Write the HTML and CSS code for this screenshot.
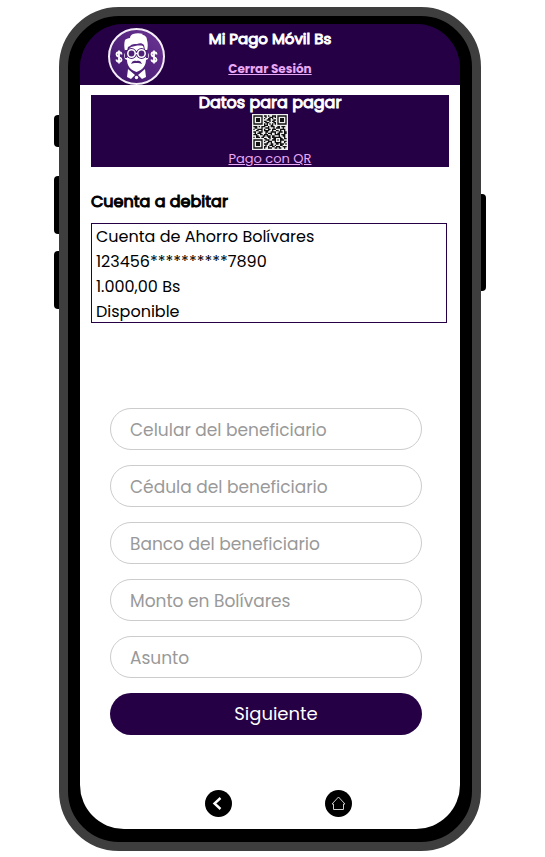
FILE: index.html
```html
<!DOCTYPE html>
<html lang="es">
<head>
<meta charset="utf-8">
<meta name="viewport" content="width=device-width, initial-scale=1">
<title>Mi Pago Móvil Bs</title>
<link rel="stylesheet" href="styles.css">
</head>
<body>
<div class="phone">
  <span class="key key-mute"></span>
  <span class="key key-up"></span>
  <span class="key key-down"></span>
  <span class="key key-power"></span>
  <main class="screen">
    <header class="header">
      <svg class="logo" viewBox="0 0 57 57" aria-hidden="true">
        <defs>
          <linearGradient id="disc" x1="0" y1="1" x2="1" y2="0">
            <stop offset="0" stop-color="#3c1268"/>
            <stop offset="1" stop-color="#6d3796"/>
          </linearGradient>
        </defs>
        <circle cx="28.500" cy="28.500" r="27.500" fill="url(#disc)" stroke="#f4eff7" stroke-width="2"/>
        <path fill="#fff" d="M17 23c-1-4-1-8 0-11 1-1 3-2 5-2 0-2 1-3 3-4 3-1 7-1 10 0l-1 1c3 0 5 2 5 5 1 3 1 7 0 11l-2-1-1-5c-2-2-4-2-7-1-3 0-5 0-7 2l-2 1-1 4z"/>
        <path fill="#fff" d="M21 21l2-2c4-1 8-2 12-1l1 3 2 9h2v-5c1 1 1 4 0 6l-2 1c0 5-3 10-9.500 12-6.500-2-9.500-7-9.500-12l-2-1c-1-2-1-5 0-6v5h2z"/>
        <g fill="#4f2177">
          <circle cx="23.500" cy="25.500" r="5.400"/><circle cx="33.500" cy="25.500" r="5.400"/>
          <path d="M17 22h7v2h-7zM33 22h7v2h-7zM26 23h5v4h-5z"/>
        </g>
        <g fill="none" stroke="#fff" stroke-width="1.600">
          <circle cx="23.500" cy="25.500" r="3.700"/><circle cx="33.500" cy="25.500" r="3.700"/>
          <path d="M27 25.500h3"/>
        </g>
        <path fill="#4f2177" d="M23 36c1-3 3-4 5.500-3 2.500-1 4.500 0 5.500 3-2-1-3-1-5.500-1s-4 0-5.500 1z"/>
        <path fill="#fff" d="M20 41l7 6-4 4-4-2zM37 41l-7 6 4 4 4-2z"/>
        <circle cx="28.500" cy="49.500" r="1.700" fill="#fff"/>
        <g fill="none" stroke="#fff" stroke-width="1.800">
          <path d="M13.500 26.500c0-3-5-3-5 0s5 2 5 5-5 3-5 0M11 22.500v13M48.500 26.500c0-3-5-3-5 0s5 2 5 5-5 3-5 0M46 22.500v13"/>
        </g>
      </svg>
      <h1 class="title">Mi Pago Móvil Bs</h1>
      <a class="logout" href="#">Cerrar Sesión</a>
    </header>

    <section class="qr-banner">
      <h2 class="qr-title">Datos para pagar</h2>
      <svg class="qr" viewBox="-1 -1 27 27" role="img" aria-label="Código QR">
        <path fill="#eee" d="M-1-1h27v27h-27z"/>
        <g fill="none" stroke="#111">
          <path d="M.5.5h6v6h-6zM18.500.5h6v6h-6zM.5 18.500h6v6h-6z"/>
          <path stroke-width="3" d="M2 3.500h3M20 3.500h3M2 21.500h3"/>
          <path d="M8 .5h2m1 0h1m2 0h3M9 1.500h1m2 0h3m1 0h1M8 2.500h1m2 0h2m1 0h1M10 3.500h3m2 0h2M8 4.500h2m2 0h1m1 0h2M9 5.500h3m3 0h2M8 6.500h1m1 0h1m1 0h1m1 0h1m1 0h1M8 7.500h3m2 0h2"/>
          <path d="M0 8.500h3m1 0h1m1 0h3m2 0h1m1 0h3m2 0h2m1 0h3M1 9.500h2m3 0h1m2 0h3m3 0h1m1 0h3m2 0h1M0 10.500h1m2 0h4m1 0h1m2 0h2m1 0h3m3 0h4M2 11.500h2m2 0h1m1 0h4m2 0h1m2 0h2m1 0h1m2 0h1M0 12.500h2m2 0h3m2 0h2m2 0h4m2 0h3m1 0h2M1 13.500h1m1 0h3m3 0h1m1 0h3m2 0h1m1 0h2m3 0h2M0 14.500h3m2 0h2m1 0h3m2 0h1m2 0h4m1 0h3M2 15.500h2m3 0h2m1 0h3m1 0h2m3 0h1m2 0h2M0 16.500h1m1 0h3m1 0h2m3 0h2m1 0h7m2 0h1"/>
          <path d="M8 17.500h2m2 0h1m2 0h2m3 0h2m1 0h2M9 18.500h3m2 0h3m1 0h1m1 0h3M8 19.500h1m2 0h3m2 0h1m3 0h1m2 0h2M10 20.500h2m1 0h1m2 0h5m2 0h1M8 21.500h3m2 0h2m2 0h2m1 0h3m1 0h1M9 22.500h1m2 0h3m1 0h1m3 0h2M8 23.500h2m1 0h1m2 0h2m1 0h3m2 0h3M8 24.500h1m2 0h3m2 0h2m1 0h2m2 0h1"/>
        </g>
      </svg>
      <a class="qr-link" href="#">Pago con QR</a>
    </section>

    <section class="account">
      <h2 class="account-title">Cuenta a debitar</h2>
      <div class="account-box">
        <div>Cuenta de Ahorro Bolívares</div>
        <div>123456**********7890</div>
        <div>1.000,00 Bs</div>
        <div>Disponible</div>
      </div>
    </section>

    <form class="form">
      <input class="field" type="tel" placeholder="Celular del beneficiario" aria-label="Celular del beneficiario">
      <input class="field" type="text" placeholder="Cédula del beneficiario" aria-label="Cédula del beneficiario">
      <input class="field" type="text" placeholder="Banco del beneficiario" aria-label="Banco del beneficiario">
      <input class="field" type="text" placeholder="Monto en Bolívares" aria-label="Monto en Bolívares">
      <input class="field" type="text" placeholder="Asunto" aria-label="Asunto">
      <button class="submit" type="button">Siguiente</button>
    </form>

    <nav class="nav">
      <a class="nav-link" href="#" aria-label="Volver">
        <svg viewBox="0 0 27 27"><circle cx="13.500" cy="13.500" r="13.500"/><path d="M15.500 8l-6 5.500 6 5.500" fill="none" stroke="#fff" stroke-width="2.400"/></svg>
      </a>
      <a class="nav-link" href="#" aria-label="Inicio">
        <svg viewBox="0 0 27 27"><circle cx="13.500" cy="13.500" r="13.500"/><path d="M7 14l6.500-7 6.500 7h-1.500v5.500h-10V14z" fill="none" stroke="#ccc" stroke-width="1" stroke-linejoin="round"/></svg>
      </a>
    </nav>
  </main>
</div>
</body>
</html>
```
FILE: styles.css
```css
* { box-sizing: border-box; }

body {
  margin: 0;
  padding: 7px 64px 6px 59px;
  background: #fff;
  color: #000;
  font-family: Poppins, Inter, sans-serif;
  font-size: 16px;
}

h1, h2 { margin: 0; }

.title, .qr-title, .account-title {
  font-weight: 400;
  -webkit-text-stroke: 1px currentColor;
}

.phone {
  position: relative;
  border: 9px solid #3e3e3e;
  border-radius: 60px;
  background: #000;
  padding: 8px 12px 13px;
}

.key {
  position: absolute;
  left: -14px;
  width: 5px;
  height: 58px;
  background: #000;
  border-radius: 4px 0 0 4px;
}
.key-mute { top: 99px; height: 32px; }
.key-up { top: 160px; }
.key-down { top: 235px; }
.key-power {
  top: 178px;
  left: auto;
  right: -14px;
  height: 97px;
  border-radius: 0 4px 4px 0;
}

.screen {
  background: linear-gradient(#250045 60px, #fff 60px);
  border-radius: 44px;
  overflow: hidden;
  padding-bottom: 12px;
}

.header {
  display: grid;
  grid-template-columns: 57px 1fr 57px;
  grid-template-rows: 29px 32px;
  align-items: center;
  justify-items: center;
  padding: 0 28px;
  background: #250045;
}
.logo {
  grid-row: 1 / 3;
  align-self: end;
  width: 57px;
  height: 57px;
}
.title {
  grid-column: 2;
  color: #fff;
  font-size: 15px;
}
.logout {
  grid-column: 2;
  color: #e9a9f5;
  font-size: 12px;
  font-weight: 700;
}

.qr-banner {
  display: flex;
  flex-direction: column;
  align-items: center;
  margin: 10px 11px 0;
  background: #250045;
}
.qr-title {
  color: #fff;
  font-size: 16px;
  line-height: 16px;
}
.qr {
  width: 36px;
  height: 36px;
  margin-top: 3px;
}
.qr-link {
  color: #e9a9f5;
  font-size: 13px;
  line-height: 17px;
}

.account { margin: 22px 13px 0 11px; }
.account-title {
  font-size: 16px;
  line-height: 26px;
}
.account-box {
  margin-top: 8px;
  padding-left: 4px;
  border: 1px solid #250045;
  font-size: 16px;
  line-height: 25px;
  height: 100px;
}

.form {
  display: flex;
  flex-direction: column;
  gap: 15px;
  margin: 85px 38px 0 30px;
}
.field, .submit {
  width: 100%;
  height: 42px;
  border-radius: 21px;
  font-family: inherit;
  font-size: 17px;
}
.field {
  padding: 2px 19px 0;
  border: 1px solid #ccc;
  background: #fff;
}
.field::placeholder { color: #999; opacity: 1; }
.submit {
  padding: 0 0 2px 20px;
  border: 0;
  background: #250045;
  color: #fff;
  font-size: 18px;
}

.nav {
  display: flex;
  justify-content: center;
  gap: 93px;
  margin-top: 55px;
  padding-left: 17px;
}
.nav-link, .nav-link svg {
  display: block;
  width: 27px;
  height: 27px;
}
```
